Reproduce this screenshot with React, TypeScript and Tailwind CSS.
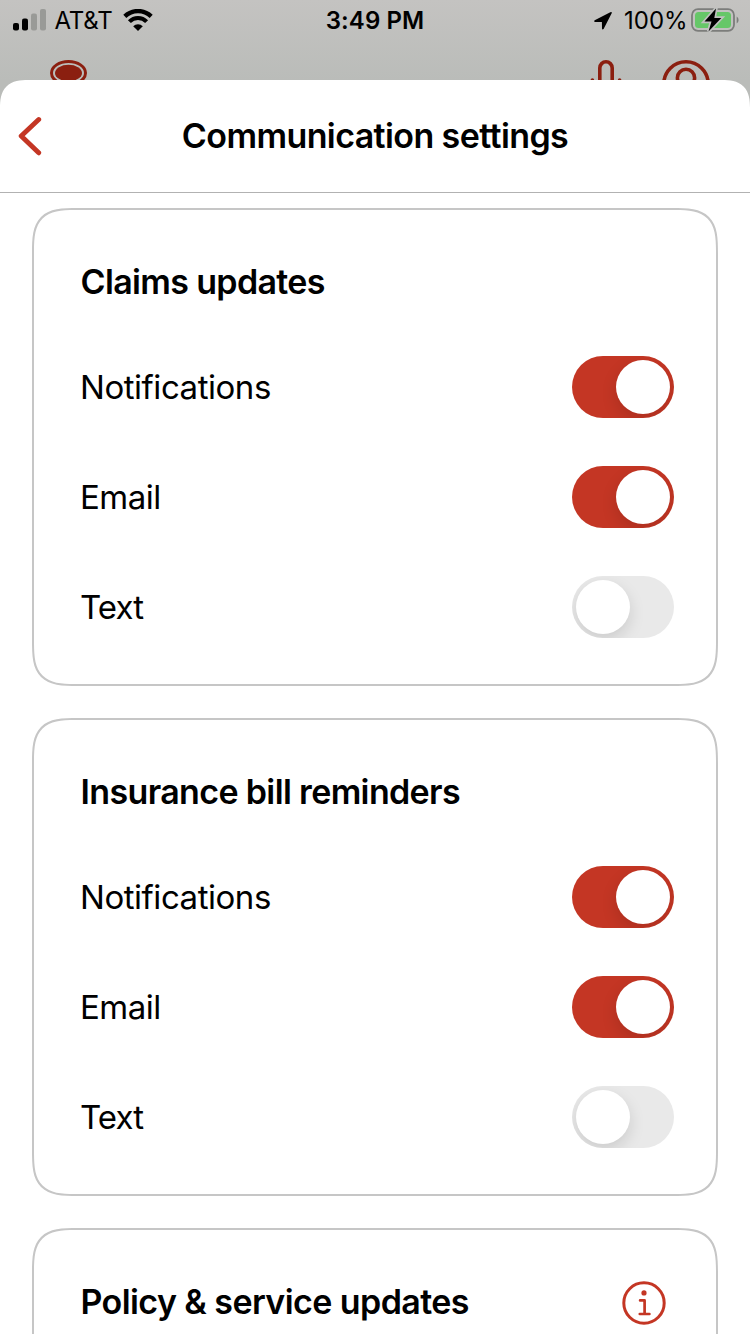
type Channel = { label: string; on: boolean; tracking: string };

const channels: Channel[] = [
  { label: 'Notifications', on: true, tracking: 'tracking-[-0.46px]' },
  { label: 'Email', on: true, tracking: 'tracking-[-0.5px]' },
  { label: 'Text', on: false, tracking: 'tracking-[-0.9px]' },
];

function StatusBar() {
  return (
    <div className="grid h-10 grid-cols-3 grid-rows-[40px] items-center text-[24px] leading-10 text-black">
      <div className="flex items-center pl-[13px]">
        <svg width="33" height="22" viewBox="0 0 33 22">
          <rect x="0" y="14" width="6" height="7.5" rx="2" />
          <rect x="9" y="9.5" width="6" height="12" rx="2" />
          <rect x="18" y="4.5" width="6" height="17" rx="2" fill="#999a97" />
          <rect x="27" y="0" width="6" height="21.5" rx="2" fill="#999a97" />
        </svg>
        <span className="mt-[2px] ml-[8.5px] w-[58.5px] whitespace-nowrap tracking-[-0.2px]">AT&amp;T</span>
        <svg width="30" height="22" viewBox="0 0 30 22" className="ml-[9.5px]" fill="none" stroke="#000">
          <path d="M1.8 7.4 A18.8 18.8 0 0 1 28.2 7.4" strokeWidth="4.3" />
          <path d="M6.4 12.6 A12 12 0 0 1 23.6 12.6" strokeWidth="4.1" />
          <path d="M10.2 17.2 A6.8 6.8 0 0 1 19.8 17.2 L15 22 Z" fill="#000" stroke="none" />
        </svg>
      </div>
      <div className="pt-[2px] text-center font-semibold tracking-[0.1px]">3:49 PM</div>
      <div className="flex items-center justify-end pr-[11px]">
        <svg width="18" height="18" viewBox="0 0 18 18" className="mt-px mr-3">
          <path d="M17.8 .9 L9.6 16.9 Q8.2 18.1 8 16.4 L7.9 10.1 L1.2 10 Q-.6 9.4 .7 8.3 L16.3 .3 Q18.1 -.3 17.8 .9Z" />
        </svg>
        <span className="mt-[2px] w-[62px] whitespace-nowrap">100%</span>
        <svg width="48" height="24" viewBox="0 0 48 24" className="mb-px ml-[5px]">
          <rect x="1" y="1.2" width="42" height="21.6" rx="6" fill="none" stroke="#7c7d7b" strokeWidth="1.8" />
          <path d="M45.7 8.5 Q47.6 9.5 47.6 12 T45.7 15.5Z" fill="#7c7d7b" />
          <rect x="4" y="4" width="36" height="16" rx="3.5" fill="#66c768" />
          <path d="M25 .5 L13.5 13.6 H20.5 L17.5 23.5 L30.3 10 H23.3Z" stroke="#c0c1bf" strokeWidth="3.4" />
          <path d="M25 .5 L13.5 13.6 H20.5 L17.5 23.5 L30.3 10 H23.3Z" />
        </svg>
      </div>
    </div>
  );
}

function BackdropIcons() {
  return (
    <div className="flex h-10 items-end overflow-hidden pr-10 pl-[50px]">
      <svg width="37" height="20" viewBox="0 0 37 20" fill="#8b1f10">
        <ellipse cx="18.5" cy="13" rx="17" ry="11.5" fill="none" stroke="#8b1f10" strokeWidth="3" />
        <ellipse cx="18.5" cy="13" rx="13.5" ry="8.3" />
      </svg>
      <svg width="32" height="20" viewBox="0 0 32 20" className="ml-auto" fill="none" stroke="#8b1f10" strokeWidth="3.6" strokeLinecap="round">
        <path d="M9.8 28 V8 A6.2 6.2 0 0 1 22.2 8 V28" />
        <path d="M2.4 20 V24 M29.6 20 V24" />
      </svg>
      <svg width="48" height="20" viewBox="0 0 48 20" className="ml-10" fill="none" stroke="#8b1f10" strokeWidth="3.6">
        <circle cx="24" cy="24" r="22.2" />
        <circle cx="24" cy="17.8" r="8.6" />
      </svg>
    </div>
  );
}

function Toggle({ on }: { on: boolean }) {
  return (
    <button
      role="switch"
      aria-checked={on}
      className={`flex h-[62px] w-[102px] shrink-0 overflow-hidden rounded-full p-1 ${on ? 'justify-end bg-[#c43624]' : 'justify-start bg-[#e9e9e9]'}`}
    >
      <span className="size-[54px] rounded-full bg-white shadow-[0_6px_16px_rgba(0,0,0,0.13)]" />
    </button>
  );
}

function InfoIcon() {
  return (
    <svg width="44" height="44" viewBox="0 0 44 44" className="mt-px mr-[0.5px]" fill="none" stroke="#c43624" strokeWidth="3">
      <circle cx="22" cy="22" r="20.2" />
      <circle cx="22" cy="11.9" r="2.6" fill="#c43624" stroke="none" />
      <path d="M18.1 19.4 H22.6 V33 M17.8 33 H27.4" strokeWidth="2.7" strokeLinecap="round" strokeLinejoin="round" />
    </svg>
  );
}

function SettingsCard({ title, tracking, info }: { title: string; tracking: string; info?: boolean }) {
  return (
    <section className="h-[478px] shrink-0 rounded-[46px] border-2 border-[#c6c6c6] pr-[42px] pl-[46px] [corner-shape:superellipse(1.675)]">
      <div className="flex h-[122px] items-center justify-between pt-[22px] pr-2">
        <h2 className={`ml-[0.5px] text-[34px] leading-[44px] font-semibold whitespace-nowrap ${tracking}`}>{title}</h2>
        {info && <InfoIcon />}
      </div>
      {!info &&
        channels.map((c) => (
          <div key={c.label} className="flex h-[110px] items-center justify-between">
            <span className={`pt-[2px] text-[33px] ${c.tracking}`}>{c.label}</span>
            <Toggle on={c.on} />
          </div>
        ))}
    </section>
  );
}

export default function App() {
  return (
    <div className="flex h-[1334px] w-[750px] flex-col overflow-hidden bg-[linear-gradient(#c4c3c1_0px,#babcb9_80px,#babcb9_110px)] font-[Inter,sans-serif] text-black">
      <StatusBar />
      <BackdropIcons />
      <main className="flex min-h-0 flex-1 flex-col overflow-hidden rounded-t-[28px] bg-white [corner-shape:superellipse(1.4)]">
        <header className="grid h-[113px] shrink-0 grid-cols-[60px_1fr_60px] items-center border-b border-[#b2b2b2]">
          <svg width="24" height="40" viewBox="0 0 24 40" className="ml-[18px]" fill="none" stroke="#c43624" strokeWidth="4.9" strokeLinecap="round" strokeLinejoin="round">
            <path d="M20.7 3.5 L3.2 20 L20.7 36.8" />
          </svg>
          <h1 className="text-center text-[34px] leading-[44px] font-semibold tracking-[-0.6px] whitespace-nowrap">Communication settings</h1>
        </header>
        <div className="flex min-h-0 flex-1 flex-col gap-8 overflow-hidden px-8 pt-[15px]">
          <SettingsCard title="Claims updates" tracking="tracking-[-0.65px]" />
          <SettingsCard title="Insurance bill reminders" tracking="tracking-[-0.64px]" />
          <SettingsCard title="Policy & service updates" tracking="tracking-[-0.58px]" info />
        </div>
      </main>
    </div>
  );
}
